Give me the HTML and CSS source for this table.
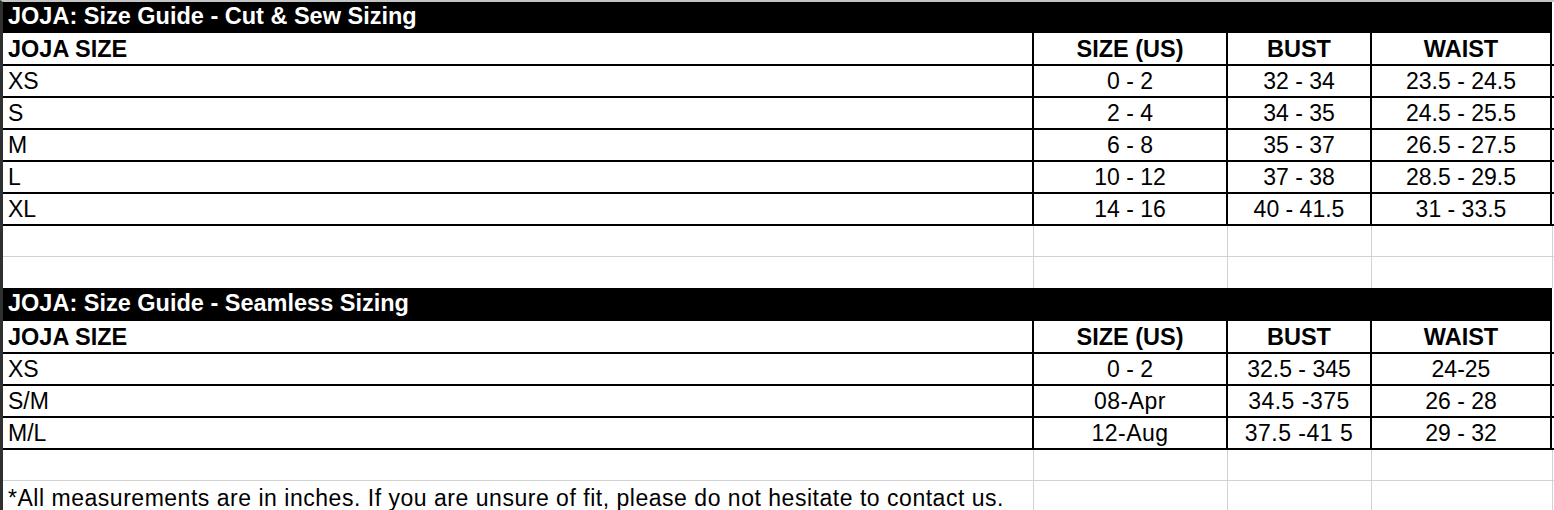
FILE: index.html
```html
<!DOCTYPE html>
<html>
<head>
<meta charset="utf-8">
<link rel="stylesheet" href="styles.css">
</head>
<body>
<div class="sheet">
  <div class="title t1">JOJA: Size Guide - Cut &amp; Sew Sizing</div>
  <div class="row head">
    <div class="c c1">JOJA SIZE</div><div class="c">SIZE (US)</div><div class="c">BUST</div><div class="c">WAIST</div>
  </div>
  <div class="row data">
    <div class="c c1">XS</div><div class="c">0 - 2</div><div class="c">32 - 34</div><div class="c">23.5 - 24.5</div>
  </div>
  <div class="row data">
    <div class="c c1">S</div><div class="c">2 - 4</div><div class="c">34 - 35</div><div class="c">24.5 - 25.5</div>
  </div>
  <div class="row data">
    <div class="c c1">M</div><div class="c">6 - 8</div><div class="c">35 - 37</div><div class="c">26.5 - 27.5</div>
  </div>
  <div class="row data">
    <div class="c c1">L</div><div class="c">10 - 12</div><div class="c">37 - 38</div><div class="c">28.5 - 29.5</div>
  </div>
  <div class="row data">
    <div class="c c1">XL</div><div class="c">14 - 16</div><div class="c">40 - 41.5</div><div class="c">31 - 33.5</div>
  </div>
  <div class="row blank line">
    <div class="c c1 nv"></div><div class="c"></div><div class="c"></div><div class="c"></div>
  </div>
  <div class="row blank">
    <div class="c c1 nv"></div><div class="c"></div><div class="c"></div><div class="c"></div>
  </div>

  <div class="title t2">JOJA: Size Guide - Seamless Sizing</div>
  <div class="row head">
    <div class="c c1">JOJA SIZE</div><div class="c">SIZE (US)</div><div class="c">BUST</div><div class="c">WAIST</div>
  </div>
  <div class="row data">
    <div class="c c1">XS</div><div class="c">0 - 2</div><div class="c">32.5 - 345</div><div class="c">24-25</div>
  </div>
  <div class="row data">
    <div class="c c1">S/M</div><div class="c wide">08-Apr</div><div class="c wide">34.5 -375</div><div class="c">26 - 28</div>
  </div>
  <div class="row data">
    <div class="c c1">M/L</div><div class="c wide">12-Aug</div><div class="c wide">37.5 -41 5</div><div class="c">29 - 32</div>
  </div>
  <div class="row blank line">
    <div class="c c1 nv"></div><div class="c"></div><div class="c"></div><div class="c"></div>
  </div>
  <div class="row blank foot">
    <div class="c c1 nv note">*All measurements are in inches. If you are unsure of fit, please do not hesitate to contact us.</div><div class="c"></div><div class="c"></div><div class="c"></div>
  </div>
</div>
</body>
</html>
```

FILE: styles.css
```css
html, body {
  margin: 0;
  padding: 0;
  background: #ffffff;
}

body {
  width: 1554px;
  height: 510px;
  overflow: hidden;
  font-family: "Liberation Sans", Arial, sans-serif;
  color: #000;
}

.sheet {
  border-top: 2px solid #c4c4c4;
  border-left: 3px solid #303030;
  width: 1551px;
}

.title {
  width: 1549px;
  background: #000;
  color: #fff;
  font-weight: bold;
  font-size: 23.5px;
  line-height: 23px;
  box-sizing: border-box;
  padding-left: 5px;
  display: flex;
  align-items: flex-end;
}

.t1 {
  height: 31px;
  padding-bottom: 5px;
}

.t2 {
  height: 33px;
  padding-bottom: 6px;
}

.row {
  display: grid;
  grid-template-columns: 1031px 194px 144px 180px;
  box-sizing: border-box;
}

.row .c {
  box-sizing: border-box;
  display: flex;
  align-items: flex-end;
  justify-content: center;
  font-size: 23px;
  line-height: 23px;
  padding-bottom: 3px;
  white-space: nowrap;
}

.row .c1 {
  justify-content: flex-start;
  padding-left: 5px;
}

.head {
  height: 33px;
  border-bottom: 2px solid #000;
}

.head .c {
  font-weight: bold;
  font-size: 23.5px;
  border-right: 2px solid #000;
  padding-bottom: 3px;
}

.data {
  height: 32px;
  border-bottom: 2px solid #000;
}

.data .c {
  border-right: 2px solid #000;
}

.wide {
  letter-spacing: 0.5px;
}

.blank {
  height: 31px;
  grid-template-columns: 1031px 194px 144px 181px;
}

.blank .c {
  border-right: 1px solid #d2d2d2;
}

.blank.line {
  border-bottom: 1px solid #d2d2d2;
  height: 31px;
}

.foot {
  height: 32px;
}

.note {
  overflow: visible;
  font-size: 23px;
  letter-spacing: 0.52px;
  padding-bottom: 2px;
}
```
